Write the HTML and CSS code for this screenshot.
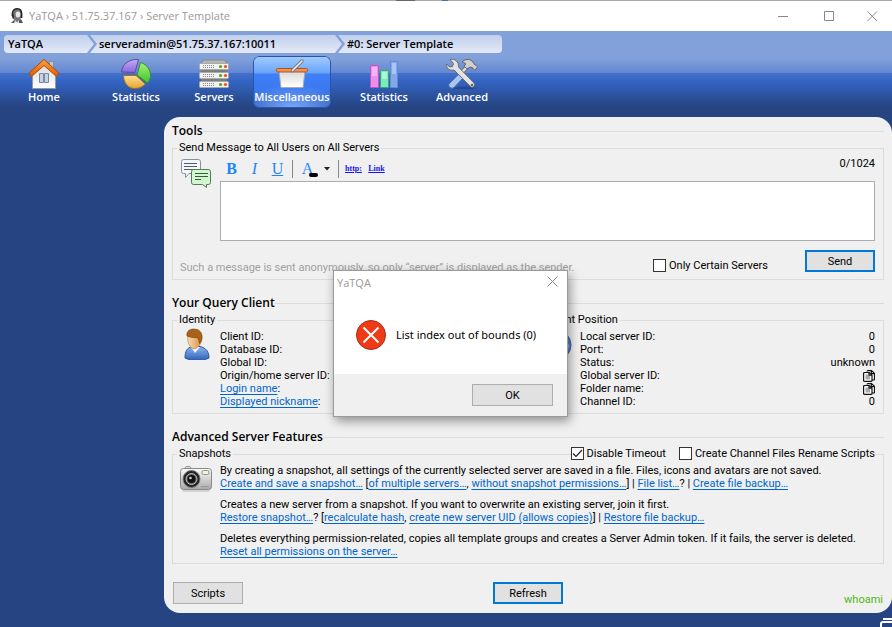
FILE: index.html
```html
<!DOCTYPE html>
<html lang="en">
<head>
<meta charset="utf-8">
<meta name="viewport" content="width=device-width, initial-scale=1">
<title>YaTQA › 51.75.37.167 › Server Template</title>
<link rel="stylesheet" href="styles.css">
</head>
<body>
<header class="titlebar">
  <svg class="app-icon" viewBox="0 0 16 16" width="16" height="16" aria-hidden="true">
    <path d="M4 7C4 3 6 1 9 1s4 3 4 6l-1 3-2 3H6L4 10z" fill="#777"/>
    <path d="M3.500 8V5C4 2 6 .8 8.500.8S12.600 3 12.600 6v4" fill="none" stroke="#222" stroke-width="1.600"/>
    <ellipse cx="9" cy="6.500" rx="2.300" ry="3" fill="#e8e8e8"/>
    <path d="M2.500 6.500h2.500v4H3.500z" fill="#333"/>
    <path d="M2 15l3-3 4 1 3-2 2 4z" fill="#555"/>
    <path d="M6 12l2 2 2-2v3H5z" fill="#ddd"/>
  </svg>
  <h1 class="window-title">YaTQA › 51.75.37.167 › Server Template</h1>
  <div class="window-buttons">
    <button type="button" aria-label="Minimize"><svg viewBox="0 0 11 11" width="11" height="11"><path d="M0 5.500h10" stroke="#888"/></svg></button>
    <button type="button" aria-label="Maximize"><svg viewBox="0 0 11 11" width="11" height="11"><path d="M.5.5h9v9h-9z" fill="none" stroke="#888"/></svg></button>
    <button type="button" aria-label="Close"><svg viewBox="0 0 11 11" width="11" height="11"><path d="M.5.5l9.500 9.500M10 .5L.5 10" stroke="#888"/></svg></button>
  </div>
</header>

<div class="workspace">
  <nav class="crumbs" aria-label="Location">
    <a href="#" class="crumb crumb-root">YaTQA</a>
    <svg class="crumb-sep" viewBox="0 0 13 18" width="13" height="18" aria-hidden="true"><path d="M0 0h2l7 9-7 9H0z" fill="url(#crumbfill)"/><path d="M5 0h8v18H5l7-9z" fill="url(#crumbfill)"/><defs><linearGradient id="crumbfill" x2="0" y2="18" gradientUnits="userSpaceOnUse"><stop stop-color="#c0cfec"/><stop offset="1" stop-color="#e3e9f7"/></linearGradient></defs></svg>
    <a href="#" class="crumb crumb-login">serveradmin@51.75.37.167:10011</a>
    <svg class="crumb-sep" viewBox="0 0 13 18" width="13" height="18" aria-hidden="true"><path d="M0 0h2l7 9-7 9H0z" fill="url(#crumbfill)"/><path d="M5 0h8v18H5l7-9z" fill="url(#crumbfill)"/></svg>
    <a href="#" class="crumb crumb-server">#0: Server Template</a>
  </nav>

  <nav class="ribbon" aria-label="Sections">
    <button type="button" class="tab tab-spaced">
      <svg viewBox="0 0 32 32" width="32" height="32" aria-hidden="true">
        <defs><linearGradient id="roof" x2="0" y2="1"><stop stop-color="#ffa040"/><stop offset="1" stop-color="#dd5a08"/></linearGradient>
        <linearGradient id="wall" x2="0" y2="1"><stop stop-color="#d9d9d9"/><stop offset="1" stop-color="#fff"/></linearGradient></defs>
        <path d="M21.500 3.500h4v8l-4-4z" fill="#b9c6dc" stroke="#8a8f99"/>
        <path d="M4.500 17L16 5.500 27.500 17v13.500h-23z" fill="url(#wall)" stroke="#999"/>
        <path d="M16 1.500L1 15l2.500 3.500L16 7.500l12.500 11L31 15z" fill="url(#roof)" stroke="#b04c00" stroke-linejoin="round"/>
        <path d="M11.500 15.500h4v9h-4zM16.500 15.500h4v9h-4z" fill="#c3d3ee" stroke="#80879a"/>
      </svg>
      <span>Home</span>
    </button>
    <button type="button" class="tab">
      <svg viewBox="0 0 32 32" width="32" height="32" aria-hidden="true">
        <defs><linearGradient id="pg" x2="0" y2="1"><stop stop-color="#a3f278"/><stop offset="1" stop-color="#3ec42c"/></linearGradient>
        <linearGradient id="po" x2="0" y2="1"><stop stop-color="#ffe08a"/><stop offset="1" stop-color="#e6a136"/></linearGradient>
        <linearGradient id="pp" x2="0" y2="1"><stop stop-color="#c4aef6"/><stop offset="1" stop-color="#8865dd"/></linearGradient></defs>
        <path d="M20.500 4.500c7 2 10.500 8 10 14-.4 3-1.500 5-3 6.500L17 17z" fill="url(#pg)" stroke="#3c8a35"/>
        <path d="M3.500 17.500H16L25.500 26c-5 5-11 5.500-15.500 3.500-4-2-6.500-7-6.500-12z" fill="url(#po)" stroke="#93712d"/>
        <path d="M1.500 14C2 7 8 .8 18.500 1.500L15 14.500z" fill="url(#pp)" stroke="#5e4a9c"/>
      </svg>
      <span>Statistics</span>
    </button>
    <button type="button" class="tab">
      <svg viewBox="0 0 32 32" width="32" height="32" aria-hidden="true">
        <path d="M2 6l4-4h20l4 4z" fill="#b5b5b5" stroke="#888"/>
        <path d="M3 5h26v25H3z" fill="#7d7d7d"/>
        <g fill="#f2f2f2" stroke="#aaa"><rect x="1.500" y="5.500" width="29" height="6" rx="1"/><rect x="1.500" y="14.500" width="29" height="6" rx="1"/><rect x="1.500" y="23.500" width="29" height="6" rx="1"/></g>
        <path d="M5 7.500h12M5 9.500h12M5 16.500h12M5 18.500h12M5 25.500h12M5 27.500h12" stroke="#888" stroke-dasharray="1 1"/>
        <g fill="#5aa51e"><circle cx="22.500" cy="8.500" r="1.600"/><circle cx="22.500" cy="17.500" r="1.600"/><circle cx="22.500" cy="26.500" r="1.600"/></g>
        <g fill="#e8511d"><circle cx="27.500" cy="8.500" r="1.600"/><circle cx="27.500" cy="17.500" r="1.600"/><circle cx="27.500" cy="26.500" r="1.600"/></g>
      </svg>
      <span>Servers</span>
    </button>
    <button type="button" class="tab tab-spaced tab-active" aria-current="page">
      <svg viewBox="0 0 32 32" width="32" height="32" aria-hidden="true">
        <path d="M3 13h26l-2 16.500H5z" fill="url(#wall)" stroke="#aaa"/>
        <path d="M2 13.500h28" stroke="#666" stroke-opacity=".5"/>
        <rect x=".5" y="10.500" width="31" height="3.500" rx="1" fill="#ee9254" stroke="#ad5620"/>
        <path d="M16.500 12.500L26 3" stroke="#777" stroke-width="3.400" stroke-linecap="round"/>
        <path d="M16.500 12.500L26 3" stroke="#ededed" stroke-width="1.600" stroke-linecap="round"/>
      </svg>
      <span>Miscellaneous</span>
    </button>
    <button type="button" class="tab">
      <svg viewBox="0 0 32 32" width="32" height="32" aria-hidden="true">
        <path d="M2.500 7.500h8v22h-8z" fill="#eb8fe9" stroke="#c651c4"/><path d="M4 9h5v9H4z" fill="#f3b4ef"/>
        <path d="M12.500 12.500h8v17h-8z" fill="#7eeaba" stroke="#2fae78"/><path d="M14 14h5v7h-5z" fill="#b0f5d6"/>
        <path d="M22.500 3.500h7v26h-7z" fill="#82a8ea" stroke="#6589d3"/><path d="M24 5h4v11h-4z" fill="#a9c5f3"/>
      </svg>
      <span>Statistics</span>
    </button>
    <button type="button" class="tab">
      <svg viewBox="0 0 32 32" width="32" height="32" aria-hidden="true">
        <ellipse cx="18" cy="30" rx="12" ry="1.500" fill="#173064" opacity=".4"/>
        <path d="M3 26L14 15l4 4L8 29.500c-3 2-6-1-5-3.500z" fill="#a8c6f0" stroke="#4c73b5"/>
        <path d="M15 15l7-7" stroke="#666" stroke-width="4.500"/><path d="M15 15l7-7" stroke="#dedede" stroke-width="2.500"/>
        <path d="M16 4c3-3 7-3.500 10-1l3 4c1 0 2 1 2.500 2L29 12c-1 0-2-1-2-2l-3-1-3 2-3-3 2-2c-1-1-2-1.500-4-2z" fill="#cfcfcf" stroke="#666"/>
        <path d="M4 1.500l3.500 4-1 3-3 .5L.8 6C0 10 3 13 8 12l16 16c2 3 6 0 4-3L12.500 9C13 4 9 0 4 1.500z" fill="#e2e2e2" stroke="#6a6a6a"/>
        <circle cx="26" cy="27" r="1.300" fill="#666"/>
      </svg>
      <span>Advanced</span>
    </button>
  </nav>

  <main class="panel">
    <section>
      <h2 class="heading">Tools</h2>
      <fieldset class="group message-group">
        <legend>Send Message to All Users on All Servers</legend>
        <svg class="group-icon" viewBox="0 0 32 32" width="32" height="32" aria-hidden="true">
          <path d="M3.500 3.500h15q2 0 2 2v10q0 2-2 2H9l-3.500 4v-4H3.500q-2 0-2-2v-10q0-2 2-2z" fill="#f2f6fa" stroke="#8a9096"/>
          <path d="M4 7.500h13M4 10.500h13M4 13.500h10" stroke="#555b60"/>
          <path d="M13.500 13.500h15q2 0 2 2v11q0 2-2 2h-2v3l-4-3h-9q-2 0-2-2v-11q0-2 2-2z" fill="#d2f7cf" stroke="#56775a"/>
          <path d="M15 17.500h13M15 20.500h13M15 23.500h6" stroke="#3d5a40"/>
        </svg>
        <div class="message-body">
          <div class="format-bar">
            <button type="button" class="fmt fmt-bold" aria-label="Bold">B</button>
            <button type="button" class="fmt fmt-italic" aria-label="Italic">I</button>
            <button type="button" class="fmt fmt-under" aria-label="Underline">U</button>
            <i class="bar-rule"></i>
            <button type="button" class="fmt fmt-color" aria-label="Text color">A</button>
            <button type="button" class="fmt fmt-drop" aria-label="More colors"></button>
            <i class="bar-rule"></i>
            <button type="button" class="fmt fmt-link">http:</button>
            <button type="button" class="fmt fmt-link">Link</button>
            <output class="counter" for="message">0/1024</output>
          </div>
          <textarea id="message" class="message-text" aria-label="Message"></textarea>
        </div>
        <div class="message-foot">
          <p class="hint">Such a message is sent anonymously, so only “server” is displayed as the sender.</p>
          <label class="check"><input type="checkbox">Only Certain Servers</label>
          <button type="button" class="btn btn-default">Send</button>
        </div>
      </fieldset>
    </section>

    <section>
      <h2 class="heading">Your Query Client</h2>
      <div class="columns">
        <fieldset class="group info-group">
          <legend>Identity</legend>
          <svg class="group-icon" viewBox="0 0 32 32" width="32" height="32" aria-hidden="true">
            <defs><linearGradient id="shirt" x2="0" y2="1"><stop stop-color="#8db4ee"/><stop offset="1" stop-color="#2f62b8"/></linearGradient>
            <linearGradient id="face" x2="1"><stop stop-color="#fbdcae"/><stop offset="1" stop-color="#d58c43"/></linearGradient></defs>
            <path d="M5 30c0-7 2-10 7-11.500h8c6 1.500 9 5 9 11.500-5 3-19 3-24 0z" fill="url(#shirt)" stroke="#2d559c"/>
            <path d="M11 19l4 6 5-6z" fill="#f2f6ff"/>
            <path d="M8 6c-1 6 0 13 6 15 5-1 8-6 8-13L15 3z" fill="url(#face)" stroke="#b87a3a" stroke-width=".6"/>
            <path d="M7 8C6 2.500 11 .5 15 1.200c6 .5 8 5 6.500 11.300l-2 3c-.5-2-.5-4-2-6-3 .5-7 0-10.500-1.500z" fill="#a8621a" stroke="#74400b" stroke-width=".6"/>
          </svg>
          <table class="info">
            <tr><th scope="row">Client ID:</th><td></td></tr>
            <tr><th scope="row">Database ID:</th><td></td></tr>
            <tr><th scope="row">Global ID:</th><td></td></tr>
            <tr><th scope="row">Origin/home server ID:</th><td></td></tr>
            <tr><th scope="row"><a href="#">Login name</a>:</th><td></td></tr>
            <tr><th scope="row"><a href="#">Displayed nickname</a>:</th><td></td></tr>
          </table>
        </fieldset>
        <fieldset class="group info-group">
          <legend>Current Position</legend>
          <svg class="group-icon" viewBox="0 0 32 32" width="32" height="32" aria-hidden="true">
            <circle cx="16" cy="17" r="15" fill="#5b82c8" stroke="#3c5f9f"/>
            <path d="M5 8c6-4 10-2 11 2s-5 5-5 9-5-3-6-11zM20 14c4-2 8 0 9 3s-4 9-7 8-4-9-2-11z" fill="#8fb0e4"/>
          </svg>
          <table class="info">
            <tr><th scope="row">Local server ID:</th><td>0</td></tr>
            <tr><th scope="row">Port:</th><td>0</td></tr>
            <tr><th scope="row">Status:</th><td>unknown</td></tr>
            <tr><th scope="row">Global server ID:</th><td><button type="button" class="copy" aria-label="Copy global server ID"><svg viewBox="0 0 12 12" width="12" height="12"><path d="M4 1.500Q4 .6 5 .6h3.500l3 2.700V9q0 1-1 1H9M8.300.6v3h3" fill="#fff" stroke="#111" stroke-width="1.200"/><path d="M1.600 2.500h4.600L9 5v5.400q0 1-1 1H1.600q-1 0-1-1V3.500q0-1 1-1z" fill="#fff" stroke="#111" stroke-width="1.200"/><path d="M2.500 4.500h3V6H7v3.500H2.500z" fill="#aaa"/><path d="M6 2.500v2.700h3" fill="none" stroke="#111" stroke-width="1.200"/></svg></button></td></tr>
            <tr><th scope="row">Folder name:</th><td><button type="button" class="copy" aria-label="Copy folder name"><svg viewBox="0 0 12 12" width="12" height="12"><path d="M4 1.500Q4 .6 5 .6h3.500l3 2.700V9q0 1-1 1H9M8.300.6v3h3" fill="#fff" stroke="#111" stroke-width="1.200"/><path d="M1.600 2.500h4.600L9 5v5.400q0 1-1 1H1.600q-1 0-1-1V3.500q0-1 1-1z" fill="#fff" stroke="#111" stroke-width="1.200"/><path d="M2.500 4.500h3V6H7v3.500H2.500z" fill="#aaa"/><path d="M6 2.500v2.700h3" fill="none" stroke="#111" stroke-width="1.200"/></svg></button></td></tr>
            <tr><th scope="row">Channel ID:</th><td>0</td></tr>
          </table>
        </fieldset>
      </div>
    </section>

    <section>
      <h2 class="heading">Advanced Server Features</h2>
      <fieldset class="group snapshot-group">
        <legend>Snapshots</legend>
        <div class="snapshot-options">
          <label class="check"><input type="checkbox" checked>Disable Timeout</label>
          <label class="check"><input type="checkbox">Create Channel Files Rename Scripts</label>
        </div>
        <svg class="group-icon" viewBox="0 0 32 32" width="32" height="32" aria-hidden="true">
          <defs><linearGradient id="cam" x2="0" y2="1"><stop stop-color="#fafafa"/><stop offset="1" stop-color="#a9a9a9"/></linearGradient></defs>
          <rect x="2" y="27" width="28" height="3" rx="1.500" fill="#d2d2d2"/>
          <path d="M5 6.500q0-2 2-2h2q2 0 2 2z" fill="#ddd" stroke="#999"/>
          <rect x=".5" y="6.500" width="31" height="21" rx="3" fill="url(#cam)" stroke="#888"/>
          <rect x="22" y="8.500" width="7" height="4" rx="1.500" fill="#eef3e2" stroke="#8f9487"/>
          <circle cx="11.500" cy="17" r="8.500" fill="#242424" stroke="#777"/>
          <circle cx="11.500" cy="17" r="5.500" fill="#666" stroke="#bbb"/>
          <circle cx="11.500" cy="17" r="4" fill="#101010"/><circle cx="10.500" cy="16" r="1.300" fill="#ccc"/>
          <path d="M21 24.500h8" stroke="#999"/>
        </svg>
        <div class="snapshot-text">
          <p>By creating a snapshot, all settings of the currently selected server are saved in a file. Files, icons and avatars are not saved.<br>
          <a href="#">Create and save a snapshot…</a> [<a href="#">of multiple servers…</a>, <a href="#">without snapshot permissions…</a>] <b class="bar">|</b> <a href="#">File list…</a>? <b class="bar">|</b> <a href="#">Create file backup…</a></p>
          <p>Creates a new server from a snapshot. If you want to overwrite an existing server, join it first.<br>
          <a href="#">Restore snapshot…</a>? [<a href="#">recalculate hash</a>, <a href="#">create new server UID (allows copies)</a>] <b class="bar">|</b> <a href="#">Restore file backup…</a></p>
          <p>Deletes everything permission-related, copies all template groups and creates a Server Admin token. If it fails, the server is deleted.<br>
          <a href="#">Reset all permissions on the server…</a></p>
        </div>
      </fieldset>
    </section>

    <footer class="actions">
      <button type="button" class="btn">Scripts</button>
      <button type="button" class="btn btn-default">Refresh</button>
      <span class="whoami">whoami</span>
    </footer>
  </main>
</div>

<svg class="corner-mark" viewBox="0 0 12 9" width="12" height="9" aria-hidden="true"><path d="M3 1h9M1 9V6q0-2 2-2H12" fill="none" stroke="#fff" stroke-width="2"/></svg>

<div class="dialog" role="alertdialog" aria-labelledby="dlg-title" aria-describedby="dlg-text">
  <div class="dialog-title">
    <span id="dlg-title">YaTQA</span>
    <button type="button" aria-label="Close dialog"><svg viewBox="0 0 11 11" width="11" height="11"><path d="M.5.5l10 10M10.500.5l-10 10" stroke="#888"/></svg></button>
  </div>
  <div class="dialog-body">
    <svg viewBox="0 0 30 30" width="30" height="30" aria-hidden="true"><circle cx="15" cy="15" r="14.500" fill="#f03a17" stroke="#a32a17"/><path d="M7.500 7.500l15 15M22.500 7.500l-15 15" stroke="#fff" stroke-width="2"/></svg>
    <p id="dlg-text">List index out of bounds (0)</p>
  </div>
  <div class="dialog-foot"><button type="button" class="btn btn-ok">OK</button></div>
</div>
</body>
</html>
```
FILE: styles.css
```css
* {
  box-sizing: border-box;
}

body {
  margin: 0;
  min-height: 100vh;
  display: flex;
  flex-direction: column;
  position: relative;
  background: #254481;
  color: #000;
  font: 11px/13px Roboto, Tahoma, sans-serif;
}

button {
  font: inherit;
  color: inherit;
  background: none;
  border: 0;
  padding: 0;
}

p {
  margin: 0;
}

a {
  color: #0066cc;
  text-underline-offset: 2px;
}

/* Window title bar */
.titlebar {
  display: flex;
  align-items: center;
  height: 31px;
  padding: 1px 0 0 9px;
  background:
    linear-gradient(#666, #666) 396px 0 / 19px 1px no-repeat,
    linear-gradient(#4a6fb5, #4a6fb5) 442px 0 / 6px 1px no-repeat,
    linear-gradient(#a9a9a9, #a9a9a9) 0 0 / 100% 1px no-repeat,
    #fff;
  font: 11px/16px "Open Sans", "Segoe UI", sans-serif;
  color: #999;
}

.window-title {
  margin: 0 auto 0 4px;
  font: inherit;
}

.window-buttons {
  display: flex;
}

.window-buttons button {
  display: flex;
  justify-content: center;
  align-items: center;
  width: 46px;
  height: 29px;
}

.window-buttons button:last-child {
  width: 40px;
}

/* Blue work area */
.workspace {
  flex: 1;
  display: flex;
  flex-direction: column;
  padding-top: 4px;
  background: linear-gradient(#82a1da 0, #82a1da 27px, #6287d2 42px, #4470c8 42px, #3465c4 50px, #254481 76px);
}

.crumbs {
  display: flex;
  height: 18px;
  padding-left: 4px;
  font: 600 11px/18px "Open Sans", "Trebuchet MS", sans-serif;
}

.crumb {
  background: linear-gradient(#c0cfec, #e3e9f7);
  color: #000;
  text-decoration: none;
}

.crumb-root {
  width: 81px;
  padding-left: 4px;
  border-radius: 4px 0 0 4px;
}

.crumb-login {
  width: 235px;
  padding-left: 1px;
}

.crumb-server {
  width: 156px;
  padding-left: 1px;
  border-radius: 0 4px 4px 0;
}

.ribbon {
  display: flex;
  padding: 3px 5px 0;
  font: 600 11px/14px "Open Sans", "Trebuchet MS", sans-serif;
  color: #fff;
}

.tab {
  display: flex;
  flex-direction: column;
  align-items: center;
  width: 78px;
  height: 52px;
  padding-top: 2px;
  border-radius: 6px;
  white-space: nowrap;
}

.tab-spaced {
  margin-right: 14px;
}

.tab-active {
  background: radial-gradient(ellipse 50px 24px at 50% 100%, #7aa8ff, transparent), linear-gradient(#a4cdff 0, #68a3fb 17px, #3f80f8 18px, #3a78ee 34px, #2f5db5 52px);
  box-shadow: inset 0 0 0 1px #2a57a5;
}

/* Main panel */
.panel {
  flex: 1;
  display: flex;
  flex-direction: column;
  gap: 15px;
  margin: 9px 0 14px 164px;
  padding: 6px 8px 7px;
  border-radius: 16px;
  background: #f0f0f0;
}

.heading {
  display: flex;
  align-items: center;
  margin: 0 0 1px;
  font: 600 12px/16px "Open Sans", Tahoma, sans-serif;
}

.heading::after {
  content: "";
  flex: 1;
  height: 1px;
  background: #dcdcdc;
}

.group {
  position: relative;
  margin: 0;
  padding: 0 8px 5px 7px;
  border: 1px solid #dcdcdc;
  min-width: 0;
  display: grid;
  grid-template-columns: 40px 1fr;
}

.group legend {
  margin-left: -3px;
  line-height: 16px;
}

.group-icon {
  display: block;
}

.message-body {
  display: flex;
  flex-direction: column;
}

.format-bar {
  display: flex;
  align-items: center;
  height: 25px;
}

.fmt {
  width: 23px;
  height: 20px;
  font: 16px/20px "Liberation Serif", serif;
  color: #1e86f5;
  text-align: center;
}

.fmt-bold {
  font-weight: bold;
}

.fmt-italic {
  font-style: italic;
}

.fmt-under {
  text-decoration: underline;
}

.fmt-color {
  position: relative;
}

.fmt-color::after {
  content: "";
  position: absolute;
  right: 1px;
  bottom: 2px;
  width: 9px;
  height: 4px;
  border-radius: 2px;
  background: #000;
}

.fmt-drop {
  width: 16px;
}

.fmt-drop::before {
  content: "";
  display: block;
  margin: 0 auto;
  width: 7px;
  height: 4px;
  background: #222;
  clip-path: polygon(0 0, 100% 0, 50% 100%);
}

.fmt-link {
  font-size: 8px;
  font-weight: bold;
  color: #1414f0;
  text-decoration: underline;
}

.bar-rule {
  width: 1px;
  height: 18px;
  margin: 0 3px;
  background: #888;
}

.counter {
  margin-left: auto;
  align-self: flex-start;
  line-height: 16px;
}

.message-text {
  height: 60px;
  border: 1px solid #abadb3;
  background: #fff;
  resize: none;
  font: inherit;
}

.message-foot {
  grid-column: 1 / -1;
  display: flex;
  align-items: flex-end;
  padding-top: 9px;
}

.hint {
  margin-right: auto;
  color: #a0a0a0;
}

.check {
  display: flex;
  align-items: center;
  gap: 3px;
}

.check input {
  appearance: none;
  width: 13px;
  height: 13px;
  margin: 0;
  border: 1px solid #333;
  background: #fff;
}

.check input:checked {
  background: #fff url("data:image/svg+xml,%3Csvg xmlns='http://www.w3.org/2000/svg' viewBox='0 0 11 11'%3E%3Cpath d='M1 5.500L4 8.500 10 2' fill='none' stroke='%23222' stroke-width='1.200'/%3E%3C/svg%3E");
}

.btn {
  width: 70px;
  height: 22px;
  border: 1px solid #adadad;
  background: #e1e1e1;
}

.btn-default {
  border: 2px solid #0078d7;
}

.message-foot .check,
.message-foot .btn {
  margin-bottom: 2px;
}

.message-foot .btn {
  margin-left: 37px;
}

.columns {
  display: grid;
  grid-template-columns: 1fr 1fr;
  gap: 8px;
}

.info {
  width: 100%;
  margin-top: 2px;
  border-spacing: 0;
}

.info th,
.info td {
  height: 13px;
  padding: 0;
  font-weight: normal;
  text-align: left;
}

.info td {
  text-align: right;
}

.copy {
  display: block;
  height: 12px;
  margin-left: auto;
}

.copy svg {
  display: block;
}

.snapshot-options {
  position: absolute;
  top: -15px;
  right: 8px;
  display: flex;
  gap: 13px;
  background: #f0f0f0;
}

.snapshot-text {
  display: flex;
  flex-direction: column;
  gap: 8px;
  padding-top: 2px;
}

.bar {
  font-weight: normal;
}

.actions {
  display: grid;
  grid-template-columns: 1fr auto 1fr;
  align-items: start;
  padding: 3px 1px 0;
}

.whoami {
  justify-self: end;
  padding-top: 11px;
  color: #4cb816;
}

.corner-mark {
  position: absolute;
  right: 0;
  bottom: 0;
}

/* Error dialog */
.dialog {
  position: absolute;
  left: 333px;
  top: 270px;
  width: 235px;
  border: 1px solid #9a9a9a;
  background: #fff;
  box-shadow: 2px 4px 10px rgba(0, 0, 0, .4);
}

.dialog-title {
  display: flex;
  justify-content: space-between;
  align-items: center;
  height: 24px;
  padding: 0 9px 0 3px;
  font: 11px/16px "Open Sans", "Segoe UI", sans-serif;
  color: #999;
}

.dialog-body {
  display: flex;
  align-items: center;
  gap: 10px;
  height: 79px;
  padding: 0 22px;
  font-family: "Noto Sans", "Segoe UI", sans-serif;
}

.dialog-foot {
  display: flex;
  justify-content: flex-end;
  padding: 10px 14px;
  background: #f0f0f0;
}

.btn-ok {
  width: 81px;
}
```
